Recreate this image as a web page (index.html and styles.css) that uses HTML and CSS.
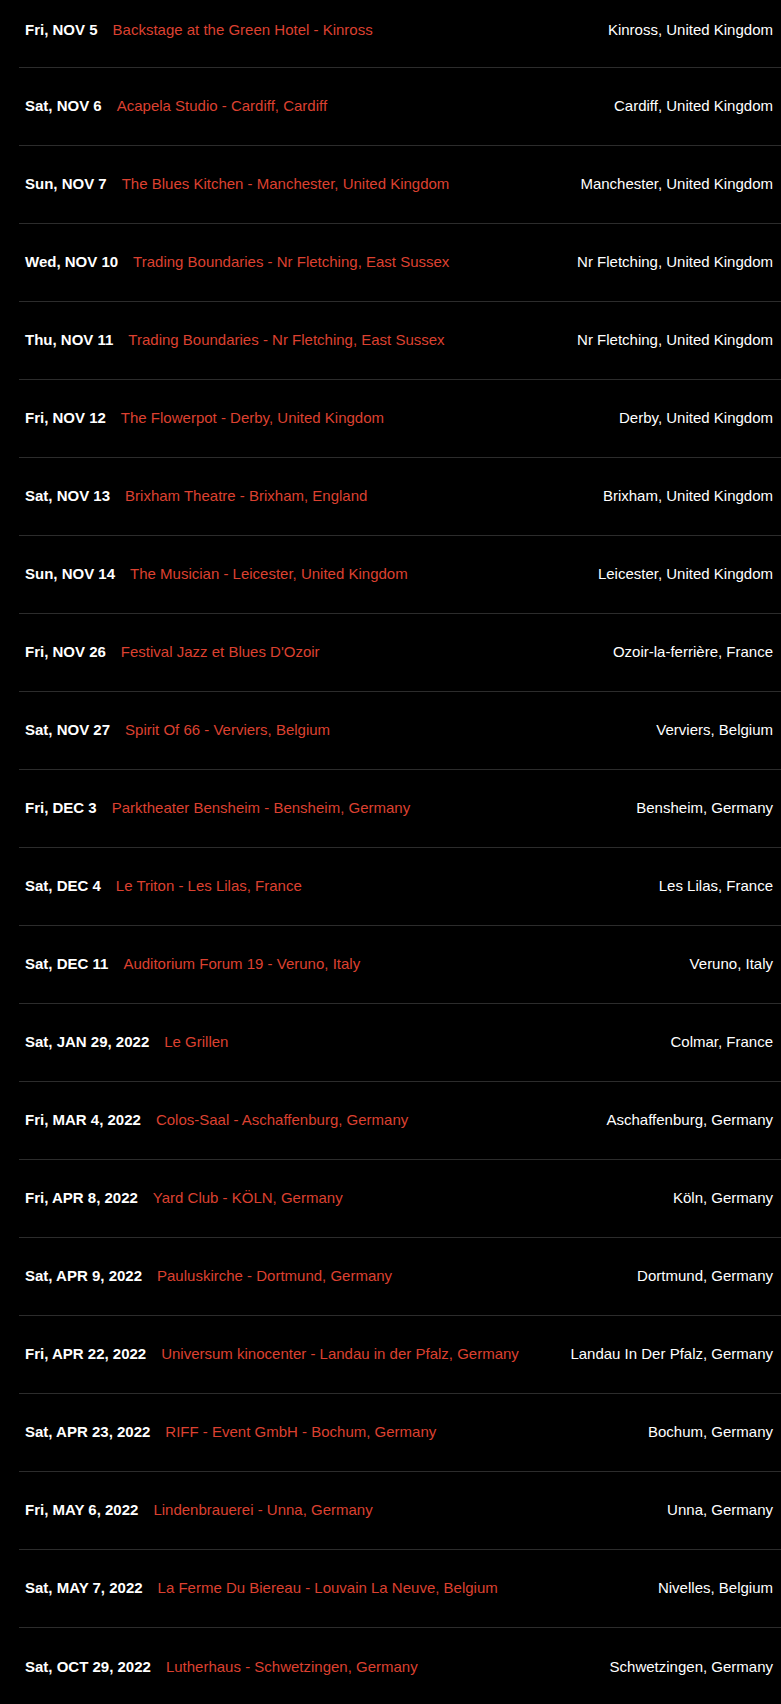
FILE: index.html
```html
<!DOCTYPE html>
<html lang="en">
<head>
<meta charset="utf-8">
<title>Tour dates</title>
<link rel="stylesheet" href="styles.css">
</head>
<body>
<ul class="shows">
  <li class="show"><span class="date">Fri, NOV 5</span><a class="venue" href="#">Backstage at the Green Hotel - Kinross</a><span class="place">Kinross, United Kingdom</span></li>
  <li class="show"><span class="date">Sat, NOV 6</span><a class="venue" href="#">Acapela Studio - Cardiff, Cardiff</a><span class="place">Cardiff, United Kingdom</span></li>
  <li class="show"><span class="date">Sun, NOV 7</span><a class="venue" href="#">The Blues Kitchen - Manchester, United Kingdom</a><span class="place">Manchester, United Kingdom</span></li>
  <li class="show"><span class="date">Wed, NOV 10</span><a class="venue" href="#">Trading Boundaries - Nr Fletching, East Sussex</a><span class="place">Nr Fletching, United Kingdom</span></li>
  <li class="show"><span class="date">Thu, NOV 11</span><a class="venue" href="#">Trading Boundaries - Nr Fletching, East Sussex</a><span class="place">Nr Fletching, United Kingdom</span></li>
  <li class="show"><span class="date">Fri, NOV 12</span><a class="venue" href="#">The Flowerpot - Derby, United Kingdom</a><span class="place">Derby, United Kingdom</span></li>
  <li class="show"><span class="date">Sat, NOV 13</span><a class="venue" href="#">Brixham Theatre - Brixham, England</a><span class="place">Brixham, United Kingdom</span></li>
  <li class="show"><span class="date">Sun, NOV 14</span><a class="venue" href="#">The Musician - Leicester, United Kingdom</a><span class="place">Leicester, United Kingdom</span></li>
  <li class="show"><span class="date">Fri, NOV 26</span><a class="venue" href="#">Festival Jazz et Blues D'Ozoir</a><span class="place">Ozoir-la-ferrière, France</span></li>
  <li class="show"><span class="date">Sat, NOV 27</span><a class="venue" href="#">Spirit Of 66 - Verviers, Belgium</a><span class="place">Verviers, Belgium</span></li>
  <li class="show"><span class="date">Fri, DEC 3</span><a class="venue" href="#">Parktheater Bensheim - Bensheim, Germany</a><span class="place">Bensheim, Germany</span></li>
  <li class="show"><span class="date">Sat, DEC 4</span><a class="venue" href="#">Le Triton - Les Lilas, France</a><span class="place">Les Lilas, France</span></li>
  <li class="show"><span class="date">Sat, DEC 11</span><a class="venue" href="#">Auditorium Forum 19 - Veruno, Italy</a><span class="place">Veruno, Italy</span></li>
  <li class="show"><span class="date">Sat, JAN 29, 2022</span><a class="venue" href="#">Le Grillen</a><span class="place">Colmar, France</span></li>
  <li class="show"><span class="date">Fri, MAR 4, 2022</span><a class="venue" href="#">Colos-Saal - Aschaffenburg, Germany</a><span class="place">Aschaffenburg, Germany</span></li>
  <li class="show"><span class="date">Fri, APR 8, 2022</span><a class="venue" href="#">Yard Club - KÖLN, Germany</a><span class="place">Köln, Germany</span></li>
  <li class="show"><span class="date">Sat, APR 9, 2022</span><a class="venue" href="#">Pauluskirche - Dortmund, Germany</a><span class="place">Dortmund, Germany</span></li>
  <li class="show"><span class="date">Fri, APR 22, 2022</span><a class="venue" href="#">Universum kinocenter - Landau in der Pfalz, Germany</a><span class="place">Landau In Der Pfalz, Germany</span></li>
  <li class="show"><span class="date">Sat, APR 23, 2022</span><a class="venue" href="#">RIFF - Event GmbH - Bochum, Germany</a><span class="place">Bochum, Germany</span></li>
  <li class="show"><span class="date">Fri, MAY 6, 2022</span><a class="venue" href="#">Lindenbrauerei - Unna, Germany</a><span class="place">Unna, Germany</span></li>
  <li class="show"><span class="date">Sat, MAY 7, 2022</span><a class="venue" href="#">La Ferme Du Biereau - Louvain La Neuve, Belgium</a><span class="place">Nivelles, Belgium</span></li>
  <li class="show"><span class="date">Sat, OCT 29, 2022</span><a class="venue" href="#">Lutherhaus - Schwetzingen, Germany</a><span class="place">Schwetzingen, Germany</span></li>
</ul>
</body>
</html>
```

FILE: styles.css
```css
html, body {
  margin: 0;
  padding: 0;
  background: #000;
}

body {
  font-family: "Liberation Sans", Arial, sans-serif;
  font-size: 15px;
  color: #fff;
}

.shows {
  list-style: none;
  margin: 0 0 0 19px;
  padding: 0;
}

.show {
  box-sizing: border-box;
  display: flex;
  align-items: center;
  gap: 15px;
  height: 78px;
  padding: 0 8px 2px 6px;
  border-bottom: 1px solid #2c2c2c;
  line-height: 21px;
}

.show:first-child {
  height: 68px;
  align-items: flex-end;
  padding-bottom: 27px;
}

.show:last-child {
  border-bottom: none;
}

.date {
  font-weight: bold;
  white-space: nowrap;
}

.venue {
  color: #dc4130;
  text-decoration: none;
  white-space: nowrap;
}

.place {
  margin-left: auto;
  white-space: nowrap;
}
```
